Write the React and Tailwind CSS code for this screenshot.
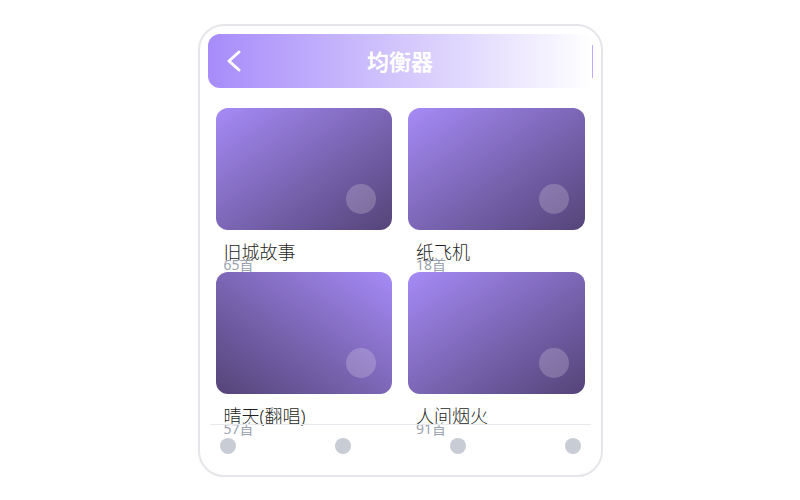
import React from "react";

const songs = [
    { title: "旧城故事", count: "65首", dir: "bg-gradient-to-br" },
    { title: "纸飞机", count: "18首", dir: "bg-gradient-to-br" },
    { title: "晴天(翻唱)", count: "57首", dir: "bg-gradient-to-bl" },
    { title: "人间烟火", count: "91首", dir: "bg-gradient-to-br" },
];

function BackIcon() {
    return (
        <svg width="16" height="22" viewBox="0 0 16 22" fill="none">
            <path d="M13 2 3 11l10 9" stroke="white" strokeWidth="3" strokeLinecap="round" strokeLinejoin="round" />
        </svg>
    );
}

export default function App() {
    return (
        <div className="w-full h-[500px] bg-white flex justify-center pt-6 font-['Noto_Sans','Noto_Sans_CJK_SC',sans-serif]">
            <div className="w-[405px] h-[453px] border-2 border-[#e6e6ea] rounded-[26px] flex flex-col overflow-hidden">
                <div className="px-2 pt-2">
                    <div className="h-[54px] rounded-xl bg-gradient-to-r from-[#a78bfa] via-[#d3c6fc] to-white grid grid-cols-[1fr_auto_1fr] items-center">
                        <div className="pl-[18px] flex items-center">
                            <BackIcon />
                        </div>
                        <h1 className="text-[22px] font-bold text-white leading-none">均衡器</h1>
                        <div className="flex justify-end">
                            <div className="w-px h-[33px] bg-[#c4a8ff]" />
                        </div>
                    </div>
                </div>

                <div className="h-[336px] px-4 pt-5">
                    <div className="grid grid-cols-2 gap-x-4">
                        {songs.map((s) => (
                            <div key={s.title}>
                                <div className={`h-[122px] rounded-xl ${s.dir} from-[#a68bf7] to-[#554479] flex items-end justify-end p-4`}>
                                    <div className="w-[30px] h-[30px] rounded-full bg-white/20" />
                                </div>
                                <div className="px-2 mt-3 text-lg leading-5 font-light text-[#1f1f23]">{s.title}</div>
                                <div className="px-2 -mt-[4px] text-sm leading-[14px] text-gray-400">{s.count}</div>
                            </div>
                        ))}
                    </div>
                </div>

                <div className="mx-[10px] border-t border-[#e8e9ee] pt-[13px] px-[10px] flex justify-between">
                    <div className="w-4 h-4 rounded-full bg-[#c8cdd5]" />
                    <div className="w-4 h-4 rounded-full bg-[#c8cdd5]" />
                    <div className="w-4 h-4 rounded-full bg-[#c8cdd5]" />
                    <div className="w-4 h-4 rounded-full bg-[#c8cdd5]" />
                </div>
            </div>
        </div>
    );
}
